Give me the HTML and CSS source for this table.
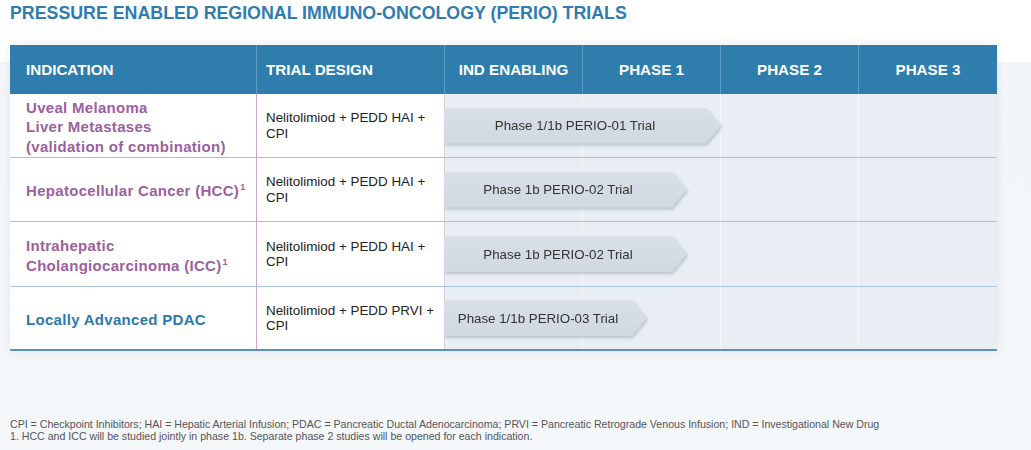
FILE: index.html
```html
<!DOCTYPE html>
<html lang="en">
<head>
<meta charset="utf-8">
<title>PERIO Trials</title>
<link rel="stylesheet" href="styles.css">
</head>
<body>
<div class="page">
  <h1 class="title">PRESSURE ENABLED REGIONAL IMMUNO-ONCOLOGY (PERIO) TRIALS</h1>
  <div class="table">
    <div class="thead">
      <div class="th th-left first">INDICATION</div>
      <div class="th th-left">TRIAL DESIGN</div>
      <div class="th">IND ENABLING</div>
      <div class="th">PHASE 1</div>
      <div class="th">PHASE 2</div>
      <div class="th last">PHASE 3</div>
    </div>

    <div class="row row-purple">
      <div class="cell ind purple"><span class="ind-text">Uveal Melanoma<br>Liver Metastases<br>(validation of combination)</span></div>
      <div class="cell design"><span>Nelitolimiod + PEDD HAI + CPI</span></div>
      <div class="cell phase"><div class="arrow-wrap" style="width:277px"><div class="arrow">Phase 1/1b PERIO-01 Trial</div></div></div>
      <div class="cell phase"></div>
      <div class="cell phase"></div>
      <div class="cell phase last"></div>
    </div>

    <div class="row row-purple">
      <div class="cell ind purple"><span class="ind-text">Hepatocellular Cancer (HCC)<sup>1</sup></span></div>
      <div class="cell design"><span>Nelitolimiod + PEDD HAI + CPI</span></div>
      <div class="cell phase"><div class="arrow-wrap" style="width:243px"><div class="arrow">Phase 1b PERIO-02 Trial</div></div></div>
      <div class="cell phase"></div>
      <div class="cell phase"></div>
      <div class="cell phase last"></div>
    </div>

    <div class="row row-blue">
      <div class="cell ind purple"><span class="ind-text">Intrahepatic<br>Cholangiocarcinoma (ICC)<sup>1</sup></span></div>
      <div class="cell design"><span>Nelitolimiod + PEDD HAI + CPI</span></div>
      <div class="cell phase"><div class="arrow-wrap" style="width:243px"><div class="arrow">Phase 1b PERIO-02 Trial</div></div></div>
      <div class="cell phase"></div>
      <div class="cell phase"></div>
      <div class="cell phase last"></div>
    </div>

    <div class="row row-bottom">
      <div class="cell ind blue"><span class="ind-text">Locally Advanced PDAC</span></div>
      <div class="cell design"><span>Nelitolimiod + PEDD PRVI + CPI</span></div>
      <div class="cell phase"><div class="arrow-wrap" style="width:203px"><div class="arrow">Phase 1/1b PERIO-03 Trial</div></div></div>
      <div class="cell phase"></div>
      <div class="cell phase"></div>
      <div class="cell phase last"></div>
    </div>
  </div>

  <div class="footnotes">
    <p>CPI = Checkpoint Inhibitors; HAI = Hepatic Arterial Infusion; PDAC = Pancreatic Ductal Adenocarcinoma; PRVI = Pancreatic Retrograde Venous Infusion; IND = Investigational New Drug</p>
    <p>1. HCC and ICC will be studied jointly in phase 1b. Separate phase 2 studies will be opened for each indication.</p>
  </div>
</div>
</body>
</html>
```
FILE: styles.css
```css
* { box-sizing: border-box; }

html, body {
  margin: 0;
  padding: 0;
}

body {
  width: 1031px;
  height: 450px;
  overflow: hidden;
  font-family: "Liberation Sans", Arial, sans-serif;
  background: linear-gradient(#ffffff 0, #ffffff 62px, #f3f6f9 62px, #f4f7fa 100%);
}

.page {
  padding: 3px 0 0 10px;
}

.title {
  margin: 0;
  font-size: 17.8px;
  line-height: 21px;
  font-weight: bold;
  color: #2f7db0;
}

.table {
  margin-top: 21px;
  width: 987px;
  box-shadow: 0 0 10px rgba(60, 80, 110, 0.10);
}

.thead,
.row {
  display: grid;
  grid-template-columns: 247px 188px 138px 138px 138px 138px;
}

.thead {
  height: 49px;
  background: #2e7dad;
}

.th {
  display: flex;
  align-items: center;
  justify-content: center;
  color: #ffffff;
  font-size: 15.2px;
  font-weight: bold;
  border-right: 1px solid #5d9bc4;
}

.th-left {
  justify-content: flex-start;
  padding-left: 9px;
}

.th.first {
  padding-left: 16px;
}

.th.last {
  border-right: none;
}

.row {
  height: 64px;
  border-bottom: 1px solid #cdb0cf;
}

.row-blue {
  height: 65px;
  border-bottom: 1px solid #a9c7dd;
}

.row-bottom {
  border-bottom: 2px solid #5d91b9;
}

.cell {
  display: flex;
  align-items: center;
}

.ind {
  background: #ffffff;
  padding: 3px 0 0 16px;
  font-size: 15px;
  line-height: 19.5px;
  font-weight: bold;
  letter-spacing: 0.3px;
  border-right: 1px solid #c9a7cc;
}

.ind sup {
  font-size: 9px;
  line-height: 0;
  vertical-align: 6px;
  letter-spacing: 0;
  margin-left: 1px;
}

.purple { color: #9c5fa0; }
.blue { color: #2b7aab; }

.design {
  background: #ffffff;
  padding: 0 10px 0 9px;
  font-size: 13.4px;
  line-height: 15.5px;
  color: #222222;
  border-right: 1px solid #cfd3db;
}

.phase {
  background: #e8eef3;
  border-right: 1px solid #f4f7f9;
  overflow: visible;
}

.phase.last {
  border-right: none;
}

.arrow-wrap {
  position: relative;
  z-index: 1;
  flex: none;
  margin-left: -1px;
  filter: drop-shadow(1px 2px 1.5px rgba(70, 85, 110, 0.28));
}

.arrow {
  height: 36px;
  display: flex;
  align-items: center;
  justify-content: center;
  padding-right: 15px;
  font-size: 13.3px;
  color: #333333;
  white-space: nowrap;
  background: linear-gradient(#d9dfe7, #d1d8e1);
  clip-path: polygon(0 0, calc(100% - 15px) 0, 100% 50%, calc(100% - 15px) 100%, 0 100%);
}

.footnotes {
  margin-top: 67px;
  color: #555555;
  font-size: 10.6px;
  line-height: 12px;
}

.footnotes p {
  margin: 0;
}
```
